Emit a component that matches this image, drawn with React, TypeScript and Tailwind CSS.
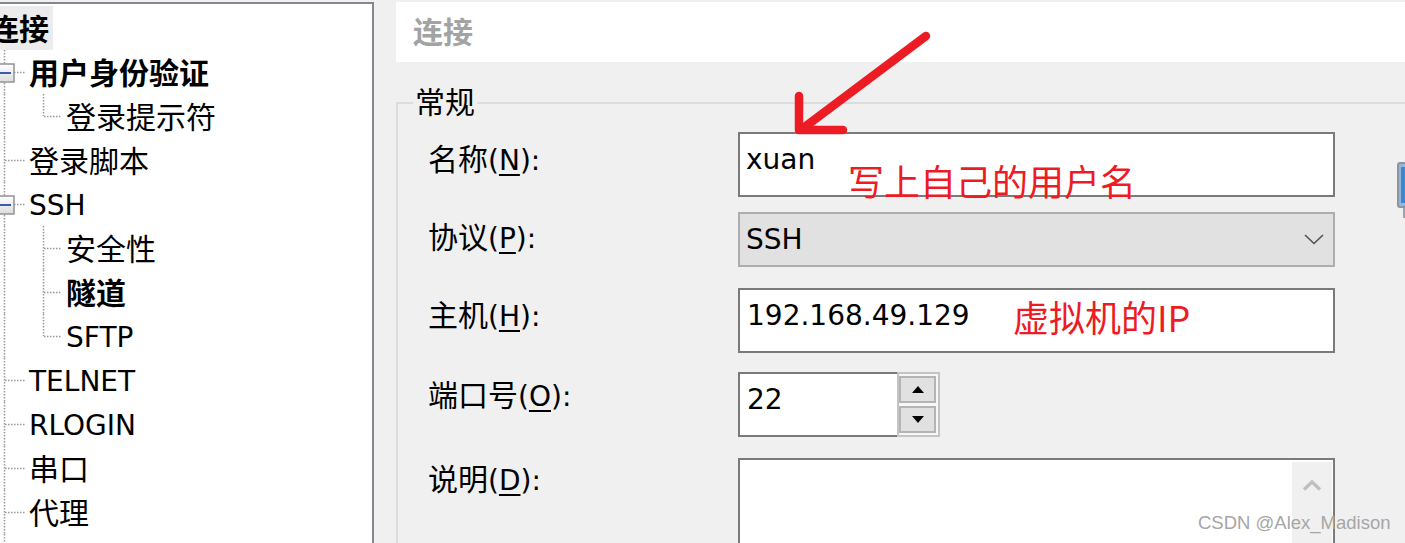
import React from "react";

type TreeItem = {
  label: string;
  level: 1 | 2;
  bold?: boolean;
  expand?: boolean;
  last?: boolean;
  cjk?: boolean;
};

const treeItems: TreeItem[] = [
  { label: "用户身份验证", level: 1, bold: true, expand: true, cjk: true },
  { label: "登录提示符", level: 2, last: true, cjk: true },
  { label: "登录脚本", level: 1, cjk: true },
  { label: "SSH", level: 1, expand: true },
  { label: "安全性", level: 2, cjk: true },
  { label: "隧道", level: 2, bold: true, cjk: true },
  { label: "SFTP", level: 2, last: true },
  { label: "TELNET", level: 1 },
  { label: "RLOGIN", level: 1 },
  { label: "串口", level: 1, cjk: true },
  { label: "代理", level: 1, cjk: true },
];

const dot = { stroke: "#9a9a9a", strokeWidth: 1.5, strokeDasharray: "1.5 1.5" };

function Gutter({ item }: { item: TreeItem }) {
  const w = item.level === 1 ? 29 : 66;
  return (
    <svg width={w} height={44} className="shrink-0 block">
      <line x1={4.5} y1={0} x2={4.5} y2={44} {...dot} />
      {item.level === 1 ? (
        <line x1={5} y1={22.5} x2={26} y2={22.5} {...dot} />
      ) : (
        <>
          <line x1={43.5} y1={0} x2={43.5} y2={item.last ? 22 : 44} {...dot} />
          <line x1={44} y1={22.5} x2={62} y2={22.5} {...dot} />
        </>
      )}
      {item.expand && (
        <>
          <defs>
            <linearGradient id="boxg" x1="0" y1="0" x2="0" y2="1">
              <stop offset="0" stopColor="#ffffff" />
              <stop offset="1" stopColor="#dcdcdc" />
            </linearGradient>
          </defs>
          <rect x={-5} y={14} width={19} height={18} fill="url(#boxg)" stroke="#939393" strokeWidth={1.5} />
          <line x1={0} y1={23} x2={11} y2={23} stroke="#3b5ca8" strokeWidth={2} />
        </>
      )}
    </svg>
  );
}

function TreeRow({ item }: { item: TreeItem }) {
  return (
    <div className="h-[44px] flex items-center">
      <Gutter item={item} />
      <span
        className={`${item.cjk ? "text-[30px]" : "text-[28px]"} ${item.bold ? "font-bold" : "font-normal"} mt-[4px] leading-[40px] whitespace-nowrap`}
      >
        {item.label}
      </span>
    </div>
  );
}

function Label({ cjk, mnemonic }: { cjk: string; mnemonic: string }) {
  return (
    <span className="whitespace-nowrap">
      <span className="text-[30px]">{cjk}</span>
      <span className="text-[28px]">
        (<span className="underline underline-offset-[4px] decoration-[1.5px]">{mnemonic}</span>):
      </span>
    </span>
  );
}

export default function App() {
  return (
    <div className="relative w-[1405px] h-[543px] overflow-hidden bg-[#f0f0f0] flex text-black font-['DejaVu_Sans','Noto_Sans_CJK_SC',sans-serif]">
      {/* session tree */}
      <aside className="w-[374px] h-[541px] mt-[2px] shrink-0 bg-white border-t-2 border-r-2 border-[#828790] overflow-hidden pt-[2px]">
        <div className="h-[44px] flex items-center">
          <span className="-ml-[11px] h-[44px] flex items-center pt-[3px] pr-[4px] bg-[#ececec] text-[30px] font-bold leading-[40px]">连接</span>
        </div>
        {treeItems.map((item) => (
          <TreeRow key={item.label} item={item} />
        ))}
        <svg width={10} height={20} className="block">
          <line x1={4.5} y1={0} x2={4.5} y2={20} {...dot} />
        </svg>
      </aside>

      {/* settings page */}
      <main className="flex-1 min-w-0 pl-[22px] pt-[2px]">
        <div className="h-[60px] bg-white flex items-center pl-[17px] pt-[2px] text-[30px] font-bold text-[#a3a3a3] leading-[40px]">连接</div>

        <fieldset className="mt-[21px] p-0 m-0 border-0 border-t-2 border-l-2 border-[#dcdcdc] min-w-0">
          <legend className="ml-[15px] px-[2px] text-[30px] leading-[40px]">常规</legend>

          <div className="pl-[30px] leading-[40px]">
            {/* 名称 */}
            <div className="flex items-start h-[65px] mt-[9px]">
              <div className="w-[310px] shrink-0 pt-[8px]">
                <Label cjk="名称" mnemonic="N" />
              </div>
              <div className="w-[597px] h-[65px] shrink-0 border-2 border-[#7a7a7a] bg-white pl-[6px] pt-[6px] text-[28px]">xuan</div>
              <svg width={20} height={58} className="shrink-0 ml-[62px] mt-[30px] overflow-visible">
                <rect x={1} y={1} width={18} height={44} rx={2} fill="#8fb6dc" stroke="#8b96a3" strokeWidth={2} />
                <rect x={4} y={5} width={14} height={36} fill="#3d86d0" />
                <rect x={6} y={46} width={8} height={10} fill="#9aa4ae" />
              </svg>
            </div>

            {/* 协议 */}
            <div className="flex items-start mt-[15px]">
              <div className="w-[310px] shrink-0 pt-[6px]">
                <Label cjk="协议" mnemonic="P" />
              </div>
              <div className="w-[597px] h-[55px] shrink-0 border-2 border-[#adadad] bg-[#e1e1e1] pl-[6px] pr-[9px] flex items-center justify-between text-[28px]">
                <span>SSH</span>
                <svg width={20} height={11} viewBox="0 0 20 11">
                  <path d="M1 1 L10 9.5 L19 1" fill="none" stroke="#505050" strokeWidth={1.6} />
                </svg>
              </div>
            </div>

            {/* 主机 */}
            <div className="flex items-start mt-[21px]">
              <div className="w-[310px] shrink-0 pt-[8px]">
                <Label cjk="主机" mnemonic="H" />
              </div>
              <div className="w-[597px] h-[65px] shrink-0 border-2 border-[#7a7a7a] bg-white pl-[7px] pt-[6px] text-[28px]">192.168.49.129</div>
            </div>

            {/* 端口号 */}
            <div className="flex items-start mt-[19px]">
              <div className="w-[310px] shrink-0 pt-[4px]">
                <Label cjk="端口号" mnemonic="O" />
              </div>
              <div className="flex h-[65px] shrink-0">
                <div className="w-[159px] h-full border-2 border-r-0 border-[#7a7a7a] bg-white pl-[7px] pt-[6px] text-[28px]">22</div>
                <div className="w-[43px] h-full border-2 border-[#c4c4c4] bg-[#f7f7f7] flex flex-col gap-[3px] py-[2px] pr-[2px]">
                  <div className="flex-1 border-2 border-[#b4b4b4] bg-[#e1e1e1] flex items-center justify-center">
                    <svg width={12} height={7} viewBox="0 0 12 7">
                      <path d="M6 0 L12 7 L0 7 Z" fill="#000" />
                    </svg>
                  </div>
                  <div className="flex-1 border-2 border-[#b4b4b4] bg-[#e1e1e1] flex items-center justify-center">
                    <svg width={12} height={7} viewBox="0 0 12 7">
                      <path d="M0 0 L12 0 L6 7 Z" fill="#000" />
                    </svg>
                  </div>
                </div>
              </div>
            </div>

            {/* 说明 */}
            <div className="flex items-start mt-[21px]">
              <div className="w-[310px] shrink-0 pt-[2px]">
                <Label cjk="说明" mnemonic="D" />
              </div>
              <div className="w-[597px] h-[110px] shrink-0 border-2 border-[#7a7a7a] bg-white flex justify-end">
                <div className="w-[40px] h-full mt-[2px] mr-[1px] bg-[#f0f0f0] flex justify-center pt-[17px]">
                  <svg width={20} height={12} viewBox="0 0 20 12">
                    <path d="M2 10.5 L10 3 L18 10.5" fill="none" stroke="#bfbfbf" strokeWidth={3.2} />
                  </svg>
                </div>
              </div>
            </div>
          </div>
        </fieldset>
      </main>

      {/* red annotations drawn over the screenshot */}
      <svg className="absolute left-0 top-0 pointer-events-none" width={1405} height={543}>
        <path d="M926 36 L806 126" fill="none" stroke="#ed1c24" strokeWidth={8.5} strokeLinecap="round" />
        <path d="M799 96 L799 130 L843 130" fill="none" stroke="#ed1c24" strokeWidth={8.5} strokeLinecap="round" strokeLinejoin="round" />
      </svg>
      <span className="absolute left-[848px] top-[160px] text-[36px] leading-[40px] text-[#ed1c24] font-['Noto_Sans_CJK_SC',sans-serif] whitespace-nowrap">
        写上自己的用户名
      </span>
      <span className="absolute left-[1013px] top-[296px] text-[36px] leading-[40px] text-[#ed1c24] font-['Noto_Sans_CJK_SC',sans-serif] whitespace-nowrap">
        虚拟机的IP
      </span>
      <span className="absolute left-[1198px] top-[511px] text-[18.5px] leading-[24px] text-[#a6a6a6] font-['Liberation_Sans',Arial,sans-serif] whitespace-nowrap">
        CSDN @Alex_Madison
      </span>
    </div>
  );
}
